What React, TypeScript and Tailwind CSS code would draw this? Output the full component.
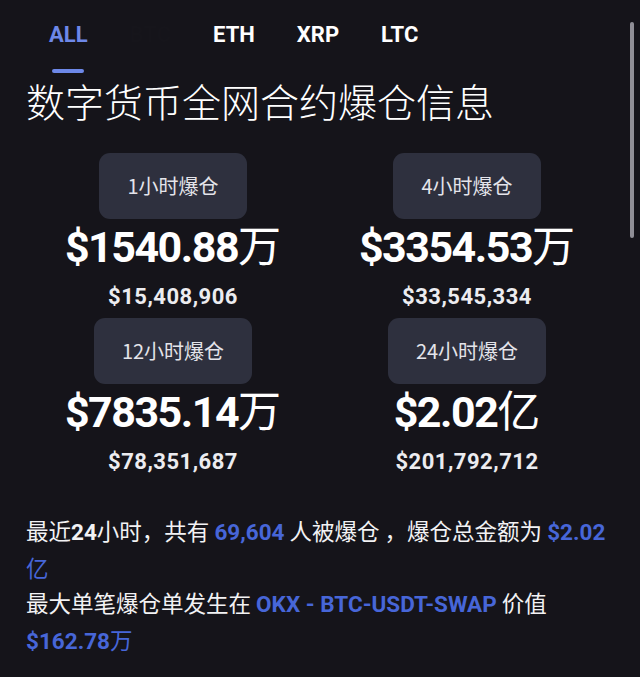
import React from 'react';

const NUM = { fontFamily: 'Roboto, "Noto Sans CJK SC", sans-serif' };
const CJK = { fontFamily: '"Noto Sans CJK SC", sans-serif' };

interface Stat {
    label: string;
    value: string;
    unit: string;
    full: string;
}

const stats: Stat[] = [
    { label: '1小时爆仓', value: '$1540.88', unit: '万', full: '$15,408,906' },
    { label: '4小时爆仓', value: '$3354.53', unit: '万', full: '$33,545,334' },
    { label: '12小时爆仓', value: '$7835.14', unit: '万', full: '$78,351,687' },
    { label: '24小时爆仓', value: '$2.02', unit: '亿', full: '$201,792,712' },
];

const StatCard: React.FC<{ stat: Stat }> = ({ stat }) => (
    <div className="flex flex-col items-center">
        <div
            className="h-[66px] px-7 flex items-center rounded-[11px] bg-[#2e303e] text-[20px] text-[#e4e4ea]"
            style={CJK}
        >
            {stat.label}
        </div>
        <div
            className="mt-[1px] h-[46px] leading-[46px] text-[43px] font-bold tracking-[-1.5px] text-white whitespace-nowrap"
            style={NUM}
        >
            {stat.value}
            <span className="font-normal tracking-normal" style={CJK}>{stat.unit}</span>
        </div>
        <div
            className="mt-[19px] h-[24px] leading-[24px] text-[22px] font-bold tracking-[0.5px] text-[#ececf0]"
            style={NUM}
        >
            {stat.full}
        </div>
    </div>
);

export default function App() {
    return (
        <div className="relative w-[640px] h-[677px] overflow-hidden bg-[#15141a] text-white">
            <div className="px-[26px]">
                <div className="flex gap-[42px] pl-[23px] pt-[23px] text-[22px] leading-[24px] font-bold" style={NUM}>
                    <div className="flex flex-col items-center">
                        <span className="text-[#6d88e8]">ALL</span>
                        <div className="mt-[22px] w-[32px] h-[4px] rounded-full bg-[#6d88e8]" />
                    </div>
                    <span className="text-[#16151b]">BTC</span>
                    <span>ETH</span>
                    <span>XRP</span>
                    <span>LTC</span>
                </div>

                <h1 className="mt-[2px] text-[39px] leading-[51px] font-light text-white" style={CJK}>
                    数字货币全网合约爆仓信息
                </h1>

                <div className="mt-[27px] grid grid-cols-2 gap-y-[9px]">
                    {stats.map((s) => (
                        <StatCard key={s.label} stat={s} />
                    ))}
                </div>

                <div className="mt-[39px] text-[22.5px] leading-[35px] text-[#f2f2f4]" style={CJK}>
                    <div className="whitespace-nowrap">
                        最近<span className="font-bold" style={NUM}>24</span>小时，共有{' '}
                        <span className="font-bold text-[#4766d8]" style={NUM}>69,604</span> 人被爆仓 ，爆仓总金额为{' '}
                        <span className="font-bold text-[#4766d8]" style={NUM}>$2.02</span>
                    </div>
                    <div className="text-[#4766d8]">亿</div>
                    <div className="whitespace-nowrap">
                        最大单笔爆仓单发生在{' '}
                        <span className="font-bold text-[#4766d8]" style={NUM}>OKX - BTC-USDT-SWAP</span> 价值
                    </div>
                    <div className="text-[#4766d8]">
                        <span className="font-bold" style={NUM}>$162.78</span>万
                    </div>
                </div>
            </div>

            <div className="absolute left-[630px] top-[22px] w-[4px] h-[216px] rounded-full bg-[#8f8e96]" />
        </div>
    );
}
